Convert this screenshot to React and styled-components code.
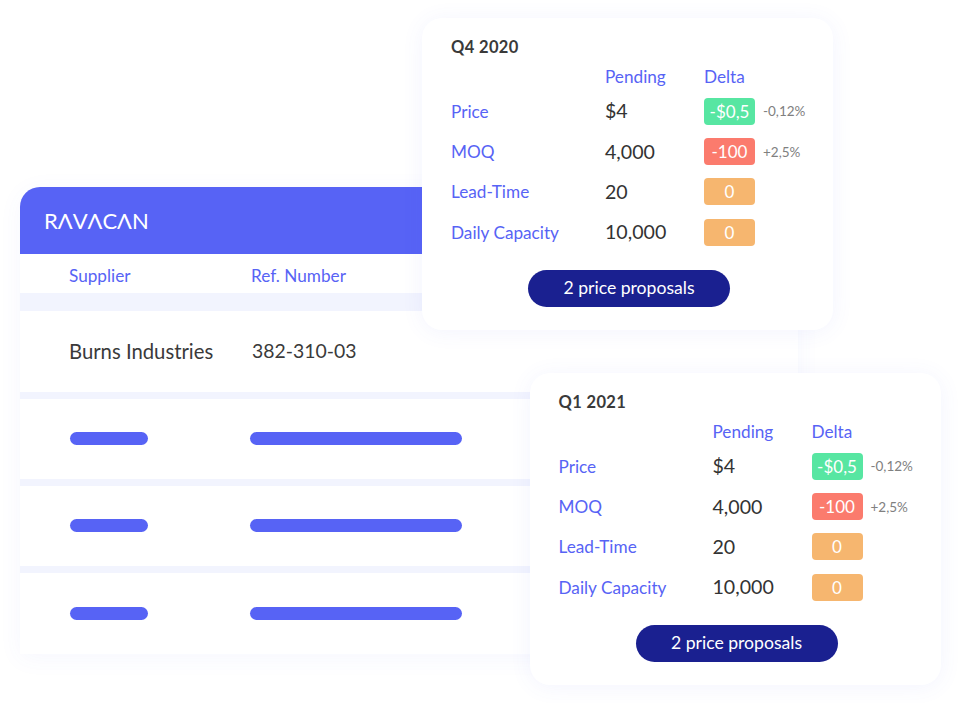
import React from 'react'
import styled, { createGlobalStyle } from 'styled-components'

const GlobalStyle = createGlobalStyle`
  html, body {
    margin: 0;
    padding: 0;
    background: #fff;
    font-family: Lato, "Open Sans", sans-serif;
  }
`

const Stage = styled.div`
  position: relative;
  width: 960px;
  height: 703px;
  overflow: hidden;
  padding: 187px 0 0 20px;
  box-sizing: border-box;
`

const Table = styled.div`
  width: 778px;
  background: #f2f4fe;
  box-shadow: 0 4px 24px rgba(87, 99, 245, 0.05);
  border-radius: 20px 0 0 0;
`

const Header = styled.div`
  height: 67px;
  background: #5763f5;
  border-radius: 20px 0 0 0;
  display: flex;
  align-items: center;
  padding-left: 24px;
`

const Logo = styled.div`
  color: #fff;
  font-size: 22px;
  font-weight: 400;
  line-height: 1;
`

const Columns = styled.div`
  height: 39px;
  box-sizing: border-box;
  padding: 3px 0 0 49px;
  background: #fff;
  margin-bottom: 18px;
  display: grid;
  grid-template-columns: 182px 1fr;
  align-items: center;
  color: #5763f5;
  font-size: 17.2px;
`

const Row = styled.div`
  height: ${p => p.$height}px;
  box-sizing: border-box;
  padding: 0 0 ${p => p.$lift}px 49px;
  background: #fff;
  margin-bottom: ${p => p.$gap}px;
  display: grid;
  grid-template-columns: 182px 1fr;
  align-items: center;
  color: #3a3a3a;
  font-size: 20.3px;
`

const RefNumber = styled.div`
  font-size: 19.4px;
  margin-left: 1px;
`

const Bar = styled.div`
  width: ${p => p.$width}px;
  height: 13px;
  margin-left: ${p => p.$shift}px;
  border-radius: 7px;
  background: #5763f5;
`

const Card = styled.div`
  position: absolute;
  left: ${p => p.$left}px;
  top: ${p => p.$top}px;
  width: 411px;
  height: 312px;
  box-sizing: border-box;
  padding: 19px 0 0 29px;
  background: #fff;
  border-radius: 20px;
  box-shadow: 0 2px 22px rgba(87, 99, 245, 0.07);
`

const Title = styled.div`
  color: #3a3a3a;
  font-size: 16.5px;
  font-weight: 700;
  line-height: 20px;
  margin-bottom: 4px;
  letter-spacing: 0.35px;
`

const Grid = styled.div`
  display: grid;
  grid-template-columns: 154px 99px 59px auto;
  grid-template-rows: 30px repeat(4, 40.4px);
  align-items: center;
`

const Label = styled.div`
  color: #5763f5;
  font-size: 17.2px;
  line-height: 20px;
  padding-top: 1px;
`

const Value = styled.div`
  color: #333;
  font-size: 19.6px;
  line-height: 24px;
`

const Pill = styled.div`
  width: 51px;
  height: 27px;
  border-radius: 4px;
  background: ${p => p.$color};
  color: #fff;
  font-size: 17px;
  line-height: 28px;
  text-align: center;
`

const Note = styled.div`
  color: #808080;
  font-size: 13.5px;
`

const Proposals = styled.div`
  width: 202px;
  height: 37px;
  margin: 17px 0 0 77px;
  border-radius: 19px;
  background: #1a2090;
  color: #fff;
  font-size: 17.6px;
  line-height: 36px;
  text-align: center;
`

const metrics = [
  { label: 'Price', value: '$4', delta: '-$0,5', color: '#57e6a2', note: '-0,12%' },
  { label: 'MOQ', value: '4,000', delta: '-100', color: '#fb7b6d', note: '+2,5%' },
  { label: 'Lead-Time', value: '20', delta: '0', color: '#f6b66f' },
  { label: 'Daily Capacity', value: '10,000', delta: '0', color: '#f6b66f' },
]

const Quarter = ({ title, left, top }) => (
  <Card $left={left} $top={top}>
    <Title>{title}</Title>
    <Grid>
      <span />
      <Label>Pending</Label>
      <Label>Delta</Label>
      <span />
      {metrics.map(m => (
        <React.Fragment key={m.label}>
          <Label>{m.label}</Label>
          <Value>{m.value}</Value>
          <Pill $color={m.color}>{m.delta}</Pill>
          <Note>{m.note}</Note>
        </React.Fragment>
      ))}
    </Grid>
    <Proposals>2 price proposals</Proposals>
  </Card>
)

const App = () => (
  <Stage>
    <GlobalStyle />
    <Table>
      <Header>
        <Logo>RΛVΛCΛN</Logo>
      </Header>
      <Columns>
        <div>Supplier</div>
        <div>Ref. Number</div>
      </Columns>
      <Row $height={81} $gap={7} $lift={2}>
        <div>Burns Industries</div>
        <RefNumber>382-310-03</RefNumber>
      </Row>
      {[80, 80, 81].map((h, i) => (
        <Row key={i} $height={h} $gap={i < 2 ? 7 : 0} $lift={1}>
          <Bar $width={78} $shift={1} />
          <Bar $width={212} $shift={-1} />
        </Row>
      ))}
    </Table>
    <Quarter title="Q4 2020" left={422} top={18} />
    <Quarter title="Q1 2021" left={529.5} top={373} />
  </Stage>
)

export default App
